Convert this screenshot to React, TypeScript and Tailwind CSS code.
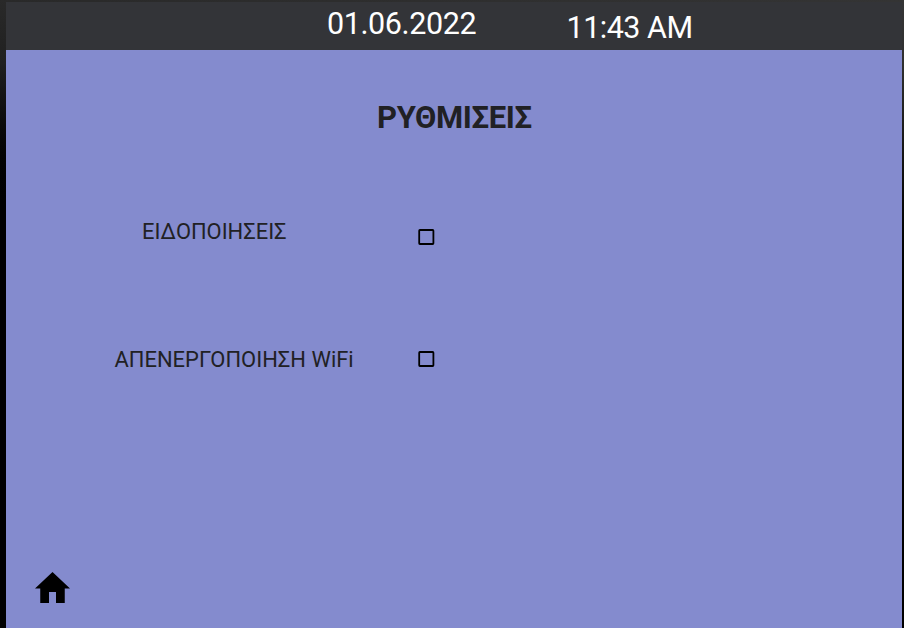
import React from "react";

function Checkbox() {
  return (
    <button role="checkbox" aria-checked="false" className="block h-4 w-[17px]">
      <svg className="block h-4 w-[17px]" viewBox="0 0 17 16" fill="none" stroke="#000">
        <rect x="1.2" y="1" width="14.2" height="14" rx="0.7" strokeWidth="1.8" />
      </svg>
    </button>
  );
}

export default function App() {
  return (
    <div className="flex h-[628px] w-[904px] font-['Roboto',sans-serif]">
      <div className="w-1.5 shrink-0 bg-linear-to-b from-[#292929] via-[#202020] via-10% to-black to-35%" />
      <div className="flex min-w-0 flex-1 flex-col">
        <div className="h-0.5 shrink-0 bg-linear-to-r from-[#292929] to-[#343434]" />
        <header className="flex h-12 shrink-0 bg-[#333438] text-white">
          <time className="mt-[3px] ml-[321px] w-[239.5px] text-[30.5px] leading-[38px] tracking-[-0.4px] whitespace-nowrap">01.06.2022</time>
          <time className="mt-[7px] text-[30.5px] leading-[38px] tracking-[-0.5px] whitespace-nowrap">11:43 AM</time>
        </header>
        <main className="flex flex-1 flex-col bg-[#848bce] text-[#212124]">
          <h1 className="mt-[48px] ml-[371px] text-[31px] leading-[40px] font-bold tracking-[-0.35px] whitespace-nowrap">ΡΥΘΜΙΣΕΙΣ</h1>
          <div className="mt-[79px] flex h-[30px]">
            <span className="ml-[136px] w-[276px] text-[21.9px] leading-[30px] whitespace-nowrap">ΕΙΔΟΠΟΙΗΣΕΙΣ</span>
            <div className="mt-[12px]"><Checkbox /></div>
          </div>
          <div className="mt-[98px] flex h-[30px]">
            <span className="ml-[108.5px] w-[303.5px] text-[21.95px] leading-[30px] whitespace-nowrap">ΑΠΕΝΕΡΓΟΠΟΙΗΣΗ WiFi</span>
            <div className="mt-[6px]"><Checkbox /></div>
          </div>
          <button aria-label="Αρχική" className="mt-[197px] ml-[29px] h-[31px] w-[35px]">
            <svg className="block h-[31px] w-[35px]" viewBox="0 0 20 17" preserveAspectRatio="none">
              <path d="M8 17v-6h4v6h5V9h3L10 0 0 9h3v8z" />
            </svg>
          </button>
        </main>
      </div>
      <div className="w-0.5 shrink-0 bg-linear-to-b from-[#353535] via-[#303030] via-10% to-black to-50%" />
    </div>
  );
}
